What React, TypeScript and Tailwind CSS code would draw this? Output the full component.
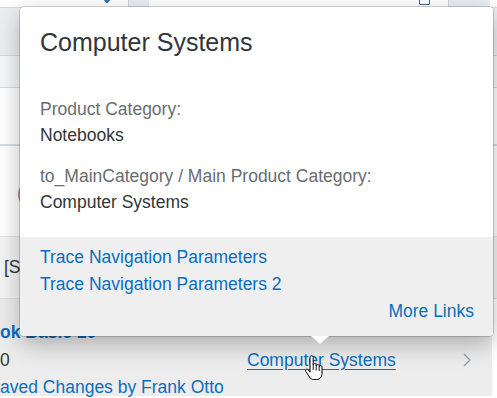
import React from 'react';

const linkColor = 'text-[#0a6ebd]';

const HandCursor = () => (
  <svg width="20" height="26" viewBox="0 0 20 26" className="absolute left-[304px] top-[355px]">
    <path
      d="M6 2.5c0-1 .7-1.7 1.6-1.7S9.2 1.5 9.2 2.5V10c0-.9.7-1.5 1.5-1.5s1.5.6 1.5 1.5v1c0-.9.7-1.5 1.5-1.5s1.5.6 1.5 1.5v1c0-.9.6-1.4 1.4-1.4s1.4.6 1.4 1.5v6.2c0 3.3-2 6.2-5.3 6.2H9.6c-1.8 0-3-.8-4-2.3L1.8 16.4c-.5-.8-.3-1.7.4-2.1.7-.4 1.5-.2 2 .5L6 17.2V2.5z"
      fill="#fff"
      stroke="#000"
      strokeWidth="1"
      strokeLinejoin="round"
    />
    <path d="M9.2 10v5M12.2 11v4.5M15.2 12v4" stroke="#000" strokeWidth="0.9" />
  </svg>
);

const Popover = () => (
  <div className="absolute left-[20px] top-[7px] w-[473px] h-[329px] rounded-[4px] bg-white shadow-[0_0_0_1px_rgba(0,0,0,0.16),0_8px_24px_rgba(0,0,0,0.28)]">
    <div className="h-[230px] pl-[20px] pt-[21px] rounded-t-[4px] bg-white">
      <div className="text-[25px] leading-[29px] text-[#32363a]">Computer Systems</div>
      <div className="mt-[39px] text-[17.5px] leading-[26px]">
        <div className="text-[#6a6d70]">Product Category:</div>
        <div className="text-[#32363a]">Notebooks</div>
        <div className="mt-[15px] text-[#6a6d70]">to_MainCategory / Main Product Category:</div>
        <div className="text-[#32363a]">Computer Systems</div>
      </div>
    </div>
    <div className={`h-[99px] bg-[#efefef] rounded-b-[4px] pl-[20px] pr-[19px] pt-[7px] text-[17.5px] ${linkColor}`}>
      <div className="leading-[27px]">Trace Navigation Parameters</div>
      <div className="leading-[27px]">Trace Navigation Parameters 2</div>
      <div className="leading-[26px] text-right">More Links</div>
    </div>
    <div className="absolute left-[291px] top-[329px] w-0 h-0 border-l-[9px] border-r-[9px] border-t-[8px] border-l-transparent border-r-transparent border-t-white" />
  </div>
);

export default function App() {
  return (
    <div
      className="relative w-[497px] h-[398px] overflow-hidden bg-white"
      style={{ fontFamily: '"Liberation Sans", Arial, sans-serif' }}
    >
      {/* header strip */}
      <div className="flex h-[8px] border-b border-[#d5d9de]">
        <div className="w-[128px] relative bg-white">
          <div className="absolute left-[104px] top-[-4px] w-[6px] h-[6px] border-r-2 border-b-2 border-[#2a6fb3] rotate-45" />
        </div>
        <div className="w-[21px] border-l border-[#d2d7dd] bg-[#e8eef4]" />
        <div className="w-[299px] relative bg-white">
          <div className="absolute left-[270px] top-[-6px] w-[11px] h-[11px] border border-[#46688f] rounded-[1px]" />
        </div>
        <div className="w-[42px] border-l border-[#d2d7dd] bg-[#e8eef4]" />
        <div className="flex-1 bg-white" />
      </div>

      {/* page content behind */}
      <div className="h-[48px] bg-[#eceff2] border-b border-[#d5d9dd]" />
      <div className="h-[32px] bg-[#f6f7f8] border-b border-[#dcdcdc]" />
      <div className="h-[58px] bg-white border-b-2 border-[#d6dee8]" />
      <div className="h-[91px] bg-white border-b border-[#e1e1e1] relative">
        <div className="absolute left-[17px] top-[34px] text-[17.5px] text-[#8a8d90]">(</div>
      </div>
      <div className="h-[62px] bg-[#f4f4f4] border-b border-[#e0e0e0] flex items-center pl-[4px] text-[17.5px] text-[#32363a]">
        [S
      </div>
      <div className="h-[97px] w-[492px] bg-[#ededed] flex text-[17.5px]">
        <div className="w-[247px] pt-[19px]">
          <div className={`leading-[28px] font-bold ${linkColor}`}>ok Basic 10</div>
          <div className="leading-[28px] text-[#32363a]">0</div>
          <div className={`leading-[27px] ${linkColor}`}>aved Changes by Frank Otto</div>
        </div>
        <div className="flex-1 pt-[47px]">
          <span className={`leading-[28px] underline underline-offset-[3px] ${linkColor}`}>Computer Systems</span>
        </div>
        <div className="w-[30px] pt-[47px] leading-[28px]">
          <svg width="10" height="14" viewBox="0 0 10 14" className="mt-[7px]">
            <path d="M2 1l6 6-6 6" fill="none" stroke="#9a9da0" strokeWidth="1.3" />
          </svg>
        </div>
      </div>

      <Popover />
      <HandCursor />
    </div>
  );
}
